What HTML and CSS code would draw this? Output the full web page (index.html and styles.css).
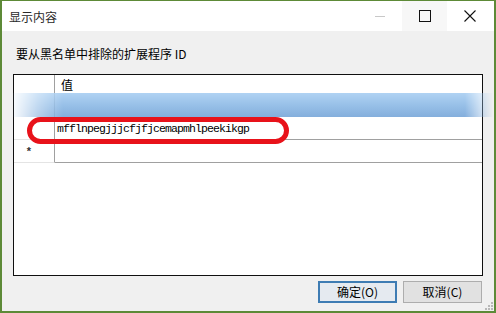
FILE: index.html
```html
<!DOCTYPE html>
<html>
<head>
<meta charset="utf-8">
<link rel="stylesheet" href="styles.css">
</head>
<body>
<div class="window">
  <div class="titlebar">
    <div class="title">显示内容</div>
    <div class="controls">
      <div class="ctl ctl-min"><svg width="12" height="12" viewBox="0 0 12 12"><path d="M1 6.5h10" stroke="#c8c8c8" stroke-width="1"/></svg></div>
      <div class="ctl ctl-max"><svg width="12" height="12" viewBox="0 0 12 12"><rect x="0.5" y="0.5" width="11" height="11" fill="none" stroke="#111" stroke-width="1"/></svg></div>
      <div class="ctl ctl-close"><svg width="12" height="12" viewBox="0 0 12 12"><path d="M0.5 0.5L11.5 11.5M11.5 0.5L0.5 11.5" stroke="#111" stroke-width="1.1"/></svg></div>
    </div>
  </div>
  <div class="content">
    <div class="label">要从黑名单中排除的扩展程序 ID</div>
    <div class="grid">
      <div class="row header">
        <div class="rh"></div>
        <div class="cell">值</div>
      </div>
      <div class="row hidden-row">
        <div class="rh"></div>
        <div class="cell"></div>
      </div>
      <div class="row data">
        <div class="rh"></div>
        <div class="cell mono">mfflnpegjjjcfjfjcemapmhlpeekikgp</div>
      </div>
      <div class="row data newrow">
        <div class="rh"><span class="star">*</span></div>
        <div class="cell"></div>
      </div>
      <div class="blur-bar"></div>
      <div class="ring"></div>
    </div>
    <div class="footer">
      <button class="btn btn-ok">确定(O)</button>
      <button class="btn">取消(C)</button>
    </div>
    <div class="grip">
      <svg width="9" height="9" viewBox="0 0 9 9" fill="#b8b8b8">
        <rect x="7" y="1" width="2" height="2"/>
        <rect x="4" y="4" width="2" height="2"/><rect x="7" y="4" width="2" height="2"/>
        <rect x="1" y="7" width="2" height="2"/><rect x="4" y="7" width="2" height="2"/><rect x="7" y="7" width="2" height="2"/>
      </svg>
    </div>
  </div>
</div>
</body>
</html>
```
FILE: styles.css
```css
html, body {
  margin: 0;
  padding: 0;
  background: #f0f0f0;
}
body {
  font-family: "Noto Sans CJK SC", "Noto Sans", sans-serif;
  font-size: 12px;
  color: #000;
}
.window {
  width: 496px;
  height: 313px;
  box-sizing: border-box;
  border: 1px solid #5d8a37;
  border-width: 1px 2px 2px 2px;
  background: #f0f0f0;
  display: flex;
  flex-direction: column;
}
.titlebar {
  height: 30px;
  background: #fff;
  display: flex;
  align-items: center;
  justify-content: space-between;
  flex: none;
}
.title {
  padding-left: 7px;
  font-size: 12px;
  color: #2a2a2a;
}
.controls {
  display: flex;
  height: 30px;
  margin-right: 2px;
}
.ctl {
  width: 45px;
  height: 30px;
  display: flex;
  align-items: center;
  justify-content: center;
}
.ctl-max {
  background: #f7f7f7;
}
.content {
  flex: 1;
  position: relative;
  padding: 15px 12px 0 11px;
  display: flex;
  flex-direction: column;
}
.label {
  padding-left: 3px;
  line-height: 16px;
  height: 16px;
}
.grid {
  margin-top: 12px;
  width: 470px;
  height: 202px;
  box-sizing: border-box;
  border: 1px solid #101010;
  background: #fff;
  position: relative;
  display: flex;
  flex-direction: column;
}
.row {
  display: flex;
  height: 23px;
  box-sizing: border-box;
}
.row.header {
  height: 19px;
}
.row.hidden-row {
  height: 23px;
}
.rh {
  width: 40px;
  flex: none;
  border-right: 1px solid #a0a0a0;
  box-sizing: content-box;
  display: flex;
  align-items: center;
  justify-content: center;
}
.cell {
  flex: 1;
  display: flex;
  align-items: center;
  padding-left: 6px;
}
.row.header .cell {
  padding-left: 6px;
  font-size: 12px;
  padding-bottom: 1px;
}
.row.data .cell {
  border-bottom: 1px solid #a0a0a0;
  padding-left: 2px;
}
.row.data .rh {
  border-bottom: 1px solid #e4e4e4;
}
.mono {
  font-family: "Liberation Mono", "DejaVu Sans Mono", monospace;
  font-size: 11.5px;
  letter-spacing: -0.9px;
  color: #000;
}
.star {
  font-family: "Liberation Sans", sans-serif;
  font-weight: bold;
  font-size: 11px;
  color: #333;
  margin-left: -10px;
}
.blur-bar {
  position: absolute;
  left: -1px;
  top: 18px;
  width: 480px;
  height: 24px;
  background: linear-gradient(to bottom, #b0d2f3 0%, #98c0e8 50%, #84aedc 100%);
  -webkit-mask-image: linear-gradient(to right, rgba(0,0,0,0.05) 0, rgba(0,0,0,0.6) 25px, #000 50px, #000 calc(100% - 28px), rgba(0,0,0,0) 100%);
  mask-image: linear-gradient(to right, rgba(0,0,0,0.05) 0, rgba(0,0,0,0.6) 25px, #000 50px, #000 calc(100% - 28px), rgba(0,0,0,0) 100%);
}
.ring {
  position: absolute;
  left: 13px;
  top: 42px;
  width: 262px;
  height: 27px;
  box-sizing: border-box;
  border: 5px solid #e8121a;
  border-radius: 14px;
}
.footer {
  display: flex;
  justify-content: flex-end;
  gap: 6px;
  margin-top: 5px;
  padding-right: 0;
}
.btn {
  width: 79px;
  height: 22px;
  box-sizing: border-box;
  background: #e1e1e1;
  border: 1px solid #adadad;
  font-family: "Noto Sans CJK SC", "Noto Sans", sans-serif;
  font-size: 12px;
  color: #000;
  padding: 0;
  line-height: 18px;
}
.btn-ok {
  border: 2px solid #3e7cb3;
  background: #e5eaf0;
}
.grip {
  position: absolute;
  right: 1px;
  bottom: 1px;
  display: flex;
}
```
